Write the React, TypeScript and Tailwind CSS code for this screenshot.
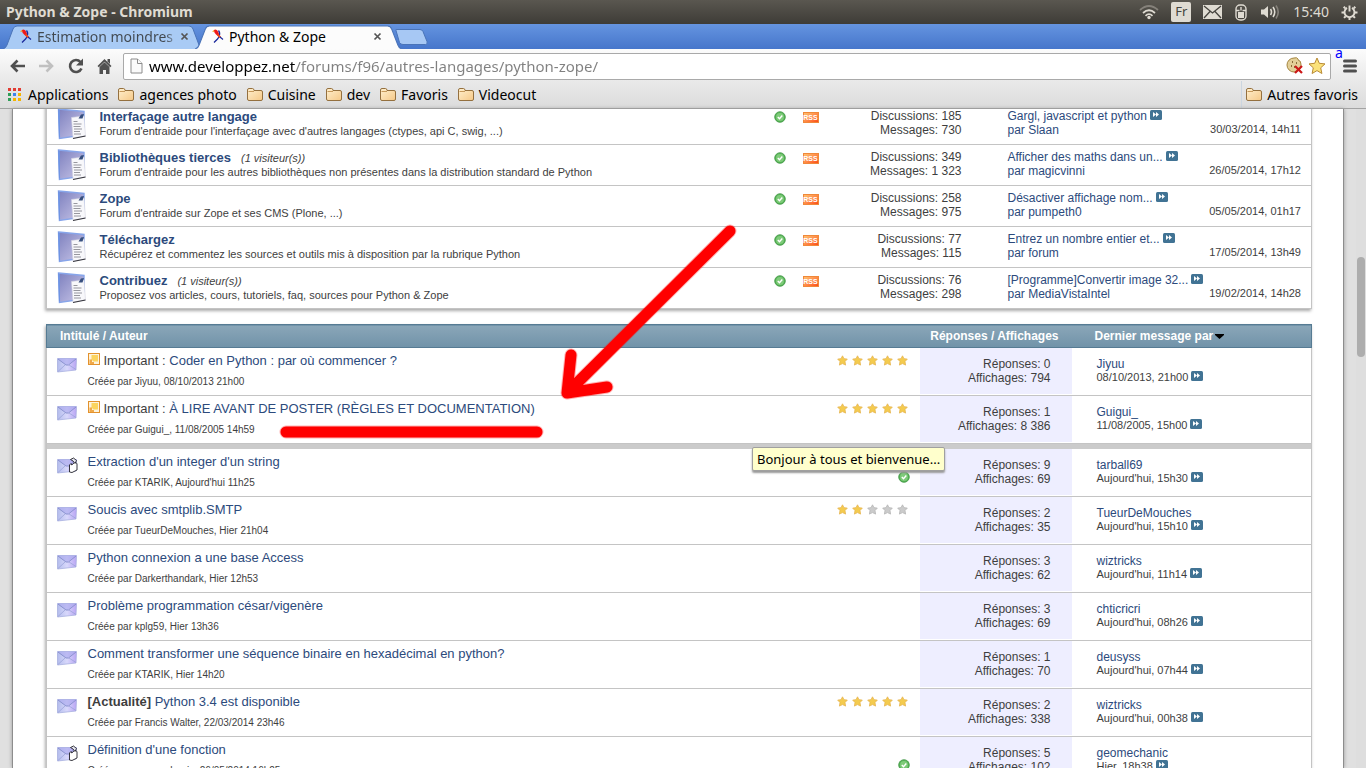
import React from "react";

type Forum = {
  title: string;
  visitors?: string;
  description: string;
  discussions: string;
  messages: string;
  lastPost: string;
  lastAuthor: string;
  date: string;
};

type Thread = {
  title: string;
  prefix?: string;
  important?: boolean;
  participated?: boolean;
  solved?: boolean;
  rating?: number;
  author: string;
  created: string;
  replies: string;
  views: string;
  lastAuthor: string;
  lastDate: string;
};

const forums: Forum[] = [
  {
    title: "Interfaçage autre langage",
    description: "Forum d'entraide pour l'interfaçage avec d'autres langages (ctypes, api C, swig, ...)",
    discussions: "185",
    messages: "730",
    lastPost: "Gargl, javascript et python",
    lastAuthor: "Slaan",
    date: "30/03/2014, 14h11",
  },
  {
    title: "Bibliothèques tierces",
    visitors: "(1 visiteur(s))",
    description: "Forum d'entraide pour les autres bibliothèques non présentes dans la distribution standard de Python",
    discussions: "349",
    messages: "1 323",
    lastPost: "Afficher des maths dans un...",
    lastAuthor: "magicvinni",
    date: "26/05/2014, 17h12",
  },
  {
    title: "Zope",
    description: "Forum d'entraide sur Zope et ses CMS (Plone, ...)",
    discussions: "258",
    messages: "975",
    lastPost: "Désactiver affichage nom...",
    lastAuthor: "pumpeth0",
    date: "05/05/2014, 01h17",
  },
  {
    title: "Téléchargez",
    description: "Récupérez et commentez les sources et outils mis à disposition par la rubrique Python",
    discussions: "77",
    messages: "115",
    lastPost: "Entrez un nombre entier et...",
    lastAuthor: "forum",
    date: "17/05/2014, 13h49",
  },
  {
    title: "Contribuez",
    visitors: "(1 visiteur(s))",
    description: "Proposez vos articles, cours, tutoriels, faq, sources pour Python & Zope",
    discussions: "76",
    messages: "298",
    lastPost: "[Programme]Convertir image 32...",
    lastAuthor: "MediaVistaIntel",
    date: "19/02/2014, 14h28",
  },
];

const stickies: Thread[] = [
  { title: "Coder en Python : par où commencer ?", important: true, rating: 5, author: "Jiyuu", created: "08/10/2013 21h00", replies: "0", views: "794", lastAuthor: "Jiyuu", lastDate: "08/10/2013, 21h00" },
  { title: "À LIRE AVANT DE POSTER (RÈGLES ET DOCUMENTATION)", important: true, rating: 5, author: "Guigui_", created: "11/08/2005 14h59", replies: "1", views: "8 386", lastAuthor: "Guigui_", lastDate: "11/08/2005, 15h00" },
];

const threads: Thread[] = [
  { title: "Extraction d'un integer d'un string", participated: true, solved: true, author: "KTARIK", created: "Aujourd'hui 11h25", replies: "9", views: "69", lastAuthor: "tarball69", lastDate: "Aujourd'hui, 15h30" },
  { title: "Soucis avec smtplib.SMTP", rating: 2, author: "TueurDeMouches", created: "Hier 21h04", replies: "2", views: "35", lastAuthor: "TueurDeMouches", lastDate: "Aujourd'hui, 15h10" },
  { title: "Python connexion a une base Access", author: "Darkerthandark", created: "Hier 12h53", replies: "3", views: "62", lastAuthor: "wiztricks", lastDate: "Aujourd'hui, 11h14" },
  { title: "Problème programmation césar/vigenère", author: "kplg59", created: "Hier 13h36", replies: "3", views: "69", lastAuthor: "chticricri", lastDate: "Aujourd'hui, 08h26" },
  { title: "Comment transformer une séquence binaire en hexadécimal en python?", author: "KTARIK", created: "Hier 14h20", replies: "1", views: "70", lastAuthor: "deusyss", lastDate: "Aujourd'hui, 07h44" },
  { title: "Python 3.4 est disponible", prefix: "[Actualité]", rating: 5, author: "Francis Walter", created: "22/03/2014 23h46", replies: "2", views: "338", lastAuthor: "wiztricks", lastDate: "Aujourd'hui, 00h38" },
  { title: "Définition d'une fonction", participated: true, solved: true, author: "geomechanic", created: "26/05/2014 16h25", replies: "5", views: "102", lastAuthor: "geomechanic", lastDate: "Hier, 18h38" },
];

const bookmarks = ["agences photo", "Cuisine", "dev", "Favoris", "Videocut"];

/* ---------- icons ---------- */

const Favicon = () => (
  <svg width="14" height="16" viewBox="0 0 14 16" fill="none">
    <path d="M3 2C5 0 8 3 8.500 8.500c-3-1-6-4-5.500-6.500z" fill="#f01818" />
    <path d="M3 2L1 3.500l2.500.5z" fill="#f5a020" />
    <path d="M7.500 2.500c2 2.500 1 6-1 8.500L3 14.500" stroke="#1c2a9c" strokeWidth="1.300" />
    <path d="M6.500 6.500l3 3" stroke="#f04818" strokeWidth="1.800" />
    <path d="M9 9l3 2.500" stroke="#1c2a9c" strokeWidth="1.200" />
  </svg>
);

const CloseIcon = () => (
  <svg width="9" height="9" viewBox="0 0 9 9" stroke="#555" strokeWidth="1.700">
    <path d="M1.500 1.500l6 6M7.500 1.500l-6 6" />
  </svg>
);

const FolderIcon = () => (
  <svg width="16" height="14" viewBox="0 0 16 14">
    <defs>
      <linearGradient id="folder" x1="0" y1="0" x2="1" y2="1">
        <stop offset="0" stopColor="#fff0cf" />
        <stop offset="1" stopColor="#f5c887" />
      </linearGradient>
    </defs>
    <path d="M.5 2Q.5.500 2 .5h3.500Q7 .5 7 2.500h7q1.500 0 1.500 1.500v7q0 1.500-1.500 1.500H2Q.5 12.500.5 11z" fill="url(#folder)" stroke="#94703f" />
    <path d="M1.500 3.500H7" stroke="#c79a5c" />
  </svg>
);

const AppsIcon = () => (
  <svg width="14" height="14" viewBox="0 0 14 14">
    <path d="M0 0h3v3H0zM5 0h3v3H5zM10 0h3v3H10z" fill="#e23c32" />
    <path d="M0 5h3v3H0zM0 10h3v3H0z" fill="#2f9e58" />
    <path d="M5 5h3v3H5z" fill="#3c82ee" />
    <path d="M10 5h3v3H10zM5 10h3v3H5zM10 10h3v3H10z" fill="#f5b400" />
  </svg>
);

const BookIcon = () => (
  <svg className="block" width="30" height="32" viewBox="0 0 30 32">
    <defs>
      <linearGradient id="book" x1="0" y1="0" x2="1" y2="1">
        <stop offset="0" stopColor="#7d80be" />
        <stop offset="1" stopColor="#cbc8ea" />
      </linearGradient>
    </defs>
    <path d="M1.500 1L27 3.500v23.500L2.500 30.500z" fill="url(#book)" stroke="#87a5ea" strokeWidth="1.400" />
    <path d="M1 1l2 1.500v26L2 31z" fill="#6f93e2" />
    <path d="M14.500 9.500L27 8l1.500 20-12.500 2z" fill="#f8f8fb" stroke="#d4d4e0" strokeWidth=".6" />
    <path d="M16.500 13.500h4M16.500 16h8M16.500 18.500h7M17 21h8M17 23.500h6M17 26h7" stroke="#8b8b93" strokeWidth=".9" />
    <path d="M21.500 10.500l2.500-4 3-.5-1.500 4.500z" fill="#38507f" />
    <path d="M16 30.500l12.500-2.500" stroke="#34343c" strokeWidth="1.200" />
  </svg>
);

const EnvelopeIcon = ({ participated }: { participated?: boolean }) => (
  <svg className="block" width="21" height="17" viewBox="0 0 21 17">
    <defs>
      <linearGradient id="envelope" x1="0" y1="0" x2="1" y2="0">
        <stop offset="0" stopColor="#b3bcec" />
        <stop offset=".5" stopColor="#d8d8fb" />
        <stop offset="1" stopColor="#b9a4f4" />
      </linearGradient>
    </defs>
    <path d="M.5 2.500h19l-.5 11.500-18.500 2z" fill="url(#envelope)" stroke="#a8b0e0" strokeWidth=".8" />
    <path d="M.5 2.500h19l-8.500 6.500H9z" fill="#a9a6ec" fillOpacity=".6" />
    <path d="M1 3l8 6h2.500l7.500-6" stroke="#858dcb" strokeWidth=".9" fill="none" />
    <path d="M1 15.500L8 9M19 13.500L12 9" stroke="#9aa3d8" strokeWidth=".8" fill="none" />
    {participated && (
      <g strokeLinejoin="round">
        <path d="M12.500 8l1.500-1.500.8 1.500 3.200-3 2 1.500v6.500l-5 2.500-2.500-.5z" fill="#fff" stroke="#22222a" strokeWidth=".9" />
        <path d="M13.500 2.500l3-1.500 3 2.500-1.500 3-2-2.500z" fill="#e6e6ee" stroke="#22222a" strokeWidth=".9" />
      </g>
    )}
  </svg>
);

const CheckIcon = () => (
  <svg className="block" width="12" height="12" viewBox="0 0 12 12">
    <circle cx="6" cy="6" r="5.300" fill="#57b557" stroke="#3f9443" strokeWidth=".8" />
    <circle cx="6" cy="6" r="3.900" fill="#7fcb7a" />
    <path d="M3.800 6l1.700 1.700 2.800-3.200" fill="none" stroke="#fff" strokeWidth="1.400" />
  </svg>
);

const RssIcon = () => (
  <span className="flex h-[11px] w-4 items-center justify-center border border-[#f0883a] bg-linear-to-br from-[#ffc070] to-[#fb4a12] text-[7px] leading-none font-bold text-white">
    RSS
  </span>
);

const JumpIcon = () => (
  <svg className="ml-[3px] inline-block align-baseline" width="12" height="10" viewBox="0 0 12 10">
    <rect width="12" height="10" rx="1.500" fill="#417394" />
    <path d="M3 2l3 2.500L3 7zM6 2l3 2.500L6 7z" fill="#fff" />
  </svg>
);

const StickyIcon = () => (
  <svg className="mr-1 inline-block align-baseline" width="12" height="12" viewBox="0 0 12 12">
    <rect x=".5" y=".5" width="11" height="11" fill="#fdf3dc" stroke="#e3922d" />
    <path d="M3.500 2h6.500v6.500H5.500l-2-2z" fill="#fbd45f" />
    <path d="M1.500 6.500h2.500v2.500h2v2H1.500z" fill="#f0a94a" />
  </svg>
);

const Star = ({ filled }: { filled: boolean }) => (
  <svg width="11" height="11" viewBox="0 0 11 11">
    <path
      d="M5.500.8l1.500 2.900 3.300.4-2.300 2.500.6 3.500-3.100-1.500-3.100 1.500.6-3.500L.7 4.100 4 3.700z"
      fill={filled ? "#f4cb4e" : "#cbcbcb"}
      stroke={filled ? "#e6b552" : "#b5b5b5"}
      strokeWidth=".8"
      strokeLinejoin="round"
    />
  </svg>
);

const Rating = ({ value }: { value: number }) => (
  <div className="mt-[7px] flex gap-1" aria-label={`${value} / 5`}>
    {[1, 2, 3, 4, 5].map((n) => (
      <Star key={n} filled={n <= value} />
    ))}
  </div>
);

/* ---------- desktop and browser ---------- */

const SystemBar = () => (
  <header className="flex h-6 shrink-0 items-center justify-between bg-linear-to-b from-[#5a5750] to-[#3e3c37] pr-2 pl-1.5 text-[#dfdbd2]">
    <h1 className="text-[14px] leading-6 font-bold">Python &amp; Zope - Chromium</h1>
    <div className="flex items-center gap-3">
      <svg width="20" height="16" viewBox="0 0 20 16" fill="none" strokeWidth="1.700">
        <path d="M1 6q9-8 18 0" stroke="#85817a" />
        <path d="M4 9q6-5.500 12 0M6.500 11.800q3.500-3.500 7 0" stroke="#dfdbd2" />
        <circle cx="10" cy="13.500" r="1.700" fill="#dfdbd2" />
      </svg>
      <span className="flex h-5 w-5 items-center justify-center rounded-xs bg-[#dfdbd2] text-[13px] text-[#45433e]">Fr</span>
      <svg width="19" height="14" viewBox="0 0 19 14">
        <path d="M0 0h19v14H0z" fill="#dfdbd2" />
        <path d="M1 1l8.500 7L18 1M1 13l6-6.500M18 13l-6-6.500" stroke="#45433e" strokeWidth="1.300" fill="none" />
      </svg>
      <svg className="mx-px" width="12" height="17" viewBox="0 0 12 17" fill="none" stroke="#dfdbd2" strokeWidth="1.400">
        <rect x="1" y="1" width="10" height="15" rx="4" />
        <rect x="3" y="8" width="6" height="6" fill="#dfdbd2" stroke="none" />
        <path d="M1 6.500h3.500M7.500 6.500H11M6 3v3.500" />
      </svg>
      <svg width="21" height="16" viewBox="0 0 21 16" fill="none" strokeWidth="1.600">
        <path d="M1 5.500h3l4-3.500v12l-4-3.500H1z" fill="#dfdbd2" />
        <path d="M10.500 5q2 3 0 6M13 3q3.500 5 0 10" stroke="#dfdbd2" />
        <path d="M16 1.500q4.500 6.500 0 13" stroke="#85817a" />
      </svg>
      <time className="text-[14px] leading-6">15:40</time>
      <svg width="17" height="16" viewBox="0 0 17 16" fill="none" stroke="#dfdbd2" strokeWidth="1.900">
        <path d="M6 3.900a5 5 0 1 0 5 0M8.500 1.500v6" />
        <path d="M4.200 4.200L2.700 2.700M12.800 4.200l1.500-1.500M3.500 8.500H.5M13.500 8.500h3M4.700 12.200l-1.700 1.700M12.300 12.200l1.700 1.700M8.500 13.500V16" strokeWidth="2" />
      </svg>
    </div>
  </header>
);

type TabProps = {
  title: string;
  active?: boolean;
};

const Tab = ({ title, active }: TabProps) => (
  <div className={active ? "relative z-10 -ml-2 h-6 w-[207px]" : "relative h-6 w-[200px]"}>
    <svg className="absolute inset-0 h-full w-full" viewBox="0 0 200 24" preserveAspectRatio="none">
      <path
        d="M0 24Q3 23 4 20L10 4Q11 1 14 1H186Q189 1 190 4L196 20Q197 23 200 24"
        fill={active ? "#fcfcfc" : "#a9cbf5"}
        stroke="#4a74b8"
        strokeWidth="1"
      />
    </svg>
    <div className="relative flex h-full items-center pr-3.5 pb-0.5 pl-4">
      <Favicon />
      <a
        href="#"
        className={
          active
            ? "ml-1 flex-1 overflow-hidden text-[14px] whitespace-nowrap text-black"
            : "ml-1 flex-1 overflow-hidden bg-[linear-gradient(to_right,#41484f_128px,transparent_144px)] bg-clip-text text-[14px] whitespace-nowrap text-transparent"
        }
      >
        {title}
      </a>
      <button aria-label="Fermer l'onglet" className={active ? "ml-1 pr-1.5" : "ml-1"}>
        <CloseIcon />
      </button>
    </div>
  </div>
);

const TabStrip = () => (
  <nav className="flex h-[25px] shrink-0 items-end bg-linear-to-b from-[#6594e0] to-[#4676cb] pl-[3px]">
    <Tab title="Estimation moindres carrés" />
    <Tab title="Python & Zope" active />
    <button aria-label="Nouvel onglet" className="mb-1 -ml-2">
      <svg className="block" width="34" height="16" viewBox="0 0 34 16">
        <path d="M2 1.500Q1 .5 3 .5h23q2 0 3 2l4 10q1 3-1.500 3H9q-2.500 0-3.500-2z" fill="#a7c8f4" stroke="#4a74b8" />
      </svg>
    </button>
  </nav>
);

const Toolbar = () => (
  <div className="flex h-8 shrink-0 items-center bg-linear-to-b from-[#fcfcfc] to-[#e9e9e9] pt-0.5 pr-[9px] pl-2">
    <div className="flex items-center gap-3">
      <button aria-label="Précédent">
        <svg className="block" width="18" height="16" viewBox="0 0 18 16" fill="none" stroke="#505050" strokeWidth="2.600">
          <path d="M17 8H4M9.500 2.500L4 8l5.500 5.500" />
        </svg>
      </button>
      <button aria-label="Suivant">
        <svg className="block" width="18" height="16" viewBox="0 0 18 16" fill="none" stroke="#c0c0c0" strokeWidth="2.600">
          <path d="M1 8h13M8.500 2.500L14 8l-5.500 5.500" />
        </svg>
      </button>
      <button aria-label="Actualiser">
        <svg className="block" width="17" height="16" viewBox="0 0 17 16">
          <path d="M13.500 10.500A6 6 0 1 1 12.500 4" fill="none" stroke="#505050" strokeWidth="2.600" />
          <path d="M15 .5v7H8z" fill="#505050" />
        </svg>
      </button>
      <button aria-label="Accueil">
        <svg className="block" width="16" height="16" viewBox="0 0 16 16">
          <path d="M7.500 1L14.500 8l-1.300 1.300L7.500 3.800 1.800 9.300.5 8z" fill="#505050" />
          <path d="M10.500 1H13v5l-2.500-2.500z" fill="#505050" />
          <path d="M2.500 9l5-4.700 5 4.700v7H9v-4H6v4H2.500z" fill="#505050" />
        </svg>
      </button>
    </div>
    <form className="ml-2.5 flex h-[27px] flex-1 items-center rounded-xs border border-[#a9a9a9] bg-white pr-1 pl-1.5">
      <svg width="13" height="16" viewBox="0 0 13 16" fill="#fafafa" stroke="#8c8c8c">
        <path d="M1 1h6.500L12 5.500V15H1z" />
        <path d="M7.500 1v4.500H12" />
      </svg>
      <input
        aria-label="Adresse"
        defaultValue="www.developpez.net/forums/f96/autres-langages/python-zope/"
        className="ml-1.5 min-w-0 flex-1 bg-[linear-gradient(to_right,#000_147px,#808080_147px)] bg-clip-text text-[15px] leading-6 text-transparent outline-none"
      />
      <svg width="18" height="18" viewBox="0 0 18 18">
        <path d="M8 1q3-1 4 1 0 2 2 2 1 2 1 4a7 7 0 1 1-7-7z" fill="#e3cf98" stroke="#a4853f" />
        <path d="M6 5h1M10 6h1M5 9h1M8 10h1" stroke="#6c4d1a" strokeWidth="1.600" />
        <path d="M9 9l7 7M16 9l-7 7" stroke="#cc1818" strokeWidth="2.200" />
      </svg>
      <button type="button" aria-label="Ajouter aux favoris" className="ml-1">
        <svg className="block" width="18" height="18" viewBox="0 0 18 18">
          <path d="M9 1l2.300 5.300 5.700.6-4.300 3.900 1.200 5.700L9 13.600l-4.900 2.900 1.200-5.700L1 6.900l5.700-.6z" fill="#fbe27a" stroke="#b98b35" strokeLinejoin="round" />
        </svg>
      </button>
    </form>
    <button aria-label="Menu" className="relative ml-3">
      <span className="absolute -top-4 -left-2 text-[14px] leading-5 text-[#0000ff]">a</span>
      <svg className="block" width="14" height="14" viewBox="0 0 14 14" stroke="#505050" strokeWidth="3" strokeLinecap="round">
        <path d="M1.500 2h11M1.500 7h11M1.500 12h11" />
      </svg>
    </button>
  </div>
);

const Bookmark = ({ label }: { label: string }) => (
  <a href="#" className="flex items-center gap-[5px]">
    <FolderIcon />
    {label}
  </a>
);

const BookmarksBar = () => (
  <nav className="flex h-7 shrink-0 items-center justify-between border-b border-[#a3a3a3] bg-linear-to-b from-[#e9e9e9] to-[#dcdcdc] px-2 text-[14px] whitespace-nowrap text-black">
    <div className="flex items-center gap-2.5">
      <a href="#" className="flex items-center gap-1.5">
        <AppsIcon />
        Applications
      </a>
      {bookmarks.map((label) => (
        <Bookmark key={label} label={label} />
      ))}
    </div>
    <div className="flex h-full items-center border-l border-[#ccd6e0] pl-1">
      <Bookmark label="Autres favoris" />
    </div>
  </nav>
);

/* ---------- forum page ---------- */

const ForumRow = ({ forum }: { forum: Forum }) => (
  <tr className="h-[41px] border-b border-[#c4c4c4] align-top">
    <td className="pt-1 pl-2.5">
      <BookIcon />
    </td>
    <td className="pt-[5px] text-[11px] leading-3">
      <a href="#" className="text-[13px] leading-4 font-bold text-[#2c4a7c]">
        {forum.title}
      </a>
      {forum.visitors && <em className="ml-2.5">{forum.visitors}</em>}
      <p>{forum.description}</p>
    </td>
    <td className="pt-[7px]">
      <div className="flex items-center gap-[17px]">
        <CheckIcon />
        <a href="#" aria-label="Flux RSS">
          <RssIcon />
        </a>
      </div>
    </td>
    <td className="pt-[5px] pr-[46px] text-right">
      <p>Discussions: {forum.discussions}</p>
      <p>Messages: {forum.messages}</p>
    </td>
    <td className="pt-[5px] pr-2.5">
      <a href="#" className="text-[#2c4a7c]">
        {forum.lastPost}
        <JumpIcon />
      </a>
      <div className="flex justify-between">
        <p className="text-[#2c4a7c]">
          par <a href="#">{forum.lastAuthor}</a>
        </p>
        <time className="text-[11px] leading-[13px]">{forum.date}</time>
      </div>
    </td>
  </tr>
);

const ForumTable = () => (
  <table className="w-full table-fixed border-collapse border border-[#c4c4c4] bg-white text-[12px] leading-[14px] shadow-[-1px_2px_3px_#aaa]">
    <colgroup>
      <col className="w-[53px]" />
      <col />
      <col className="w-[62px]" />
      <col className="w-[172px]" />
      <col className="w-[304px]" />
    </colgroup>
    <tbody>
      {forums.map((forum) => (
        <ForumRow key={forum.title} forum={forum} />
      ))}
    </tbody>
  </table>
);

const ThreadRow = ({ thread }: { thread: Thread }) => (
  <tr className="h-12 border-b border-[#c4c4c4] align-top">
    <td className="pt-2 pl-2.5">
      <EnvelopeIcon participated={thread.participated} />
    </td>
    <td className="pr-3">
      <div className="flex justify-between">
        <div className="pt-1">
          <h3 className="text-[13px] leading-[18px]">
            {thread.important && (
              <>
                <StickyIcon />
                Important :{" "}
              </>
            )}
            {thread.prefix && <b>{thread.prefix} </b>}
            <a href="#" className="text-[#2c4a7c]">
              {thread.title}
            </a>
          </h3>
          <p className="mt-[5px] text-[10px] leading-[14px]">
            Créée par {thread.author}, {thread.created}
          </p>
        </div>
        {thread.rating && <Rating value={thread.rating} />}
        {thread.solved && (
          <div className="-mr-0.5 pt-[22px]">
            <CheckIcon />
          </div>
        )}
      </div>
    </td>
    <td className="bg-[#eeeeff] pt-[9px] pr-[21px] text-right shadow-[inset_0_-1px_#fff]">
      <p>Réponses: {thread.replies}</p>
      <p>Affichages: {thread.views}</p>
    </td>
    <td className="pt-[9px] pl-[25px]">
      <a href="#" className="block text-[#2c4a7c]">
        {thread.lastAuthor}
      </a>
      <p className="text-[11px] leading-3">
        {thread.lastDate}
        <a href="#" aria-label="Dernier message">
          <JumpIcon />
        </a>
      </p>
    </td>
  </tr>
);

const ThreadTable = () => (
  <table className="w-full table-fixed border-collapse border-x border-[#c4c4c4] bg-white text-[12px] leading-[14px] shadow-[-1px_2px_3px_#aaa]">
    <colgroup>
      <col className="w-[41px]" />
      <col />
      <col className="w-[152px]" />
      <col className="w-[240px]" />
    </colgroup>
    <thead>
      <tr className="h-[23px] border border-[#567b93] bg-linear-to-b from-[#8aa6b8] to-[#7193a9] text-left text-white">
        <th colSpan={2} className="pl-[13px]">
          Intitulé / Auteur
        </th>
        <th className="pr-[13px] text-right whitespace-nowrap">Réponses / Affichages</th>
        <th className="pl-[23px]">
          Dernier message par
          <svg className="ml-0.5 inline-block" width="9" height="5" viewBox="0 0 9 5">
            <path d="M0 0h9v1L4.500 5 0 1z" fill="#000" />
          </svg>
        </th>
      </tr>
    </thead>
    <tbody>
      {stickies.map((thread) => (
        <ThreadRow key={thread.title} thread={thread} />
      ))}
      <tr className="h-[5px] bg-[#cbcbcb]">
        <td colSpan={4} />
      </tr>
      {threads.map((thread) => (
        <ThreadRow key={thread.title} thread={thread} />
      ))}
    </tbody>
  </table>
);

const Annotations = () => (
  <svg
    className="pointer-events-none absolute top-0 left-0"
    width="760"
    height="450"
    viewBox="0 0 760 450"
    fill="none"
    strokeLinecap="round"
    strokeLinejoin="round"
  >
    <g stroke="#ff0000" strokeOpacity=".3" strokeWidth="13">
      <path d="M730 231L567 393M571 355l-4 38 40-6M286 432h251" />
    </g>
    <g stroke="#ff0000" strokeWidth="11">
      <path d="M730 231L567 393M571 355l-4 38 40-6M286 432h251" />
    </g>
  </svg>
);

const App = () => {
  return (
    <div className="relative flex h-screen flex-col overflow-hidden bg-[#e0e0e0] font-['Noto_Sans',sans-serif]">
      <SystemBar />
      <TabStrip />
      <Toolbar />
      <BookmarksBar />

      <div className="flex min-h-0 flex-1">
        <main className="ml-3 flex-1 overflow-hidden border-x border-[#8d8d8d] bg-white pr-[31px] pl-[33px] font-['Liberation_Sans',Arial,sans-serif] text-[#3e3e3e] shadow-[0_0_4px_#999]">
          <div className="-mt-1.5 flex flex-col gap-[15px]">
            <ForumTable />
            <ThreadTable />
          </div>
        </main>
        <div className="ml-3 w-2.5 bg-[#dedede] pt-[148px]">
          <div className="ml-px h-[100px] w-2 rounded-full bg-[#adadad]" />
        </div>
      </div>

      <div
        role="tooltip"
        className="absolute top-[447px] left-[752px] rounded-xs border border-[#a0a0a0] bg-[#ffffcc] px-1 text-[13px] leading-[22px] text-black shadow-[0_2px_2px_#999]"
      >
        Bonjour à tous et bienvenue...
      </div>
      <Annotations />
    </div>
  );
};

export default App;
